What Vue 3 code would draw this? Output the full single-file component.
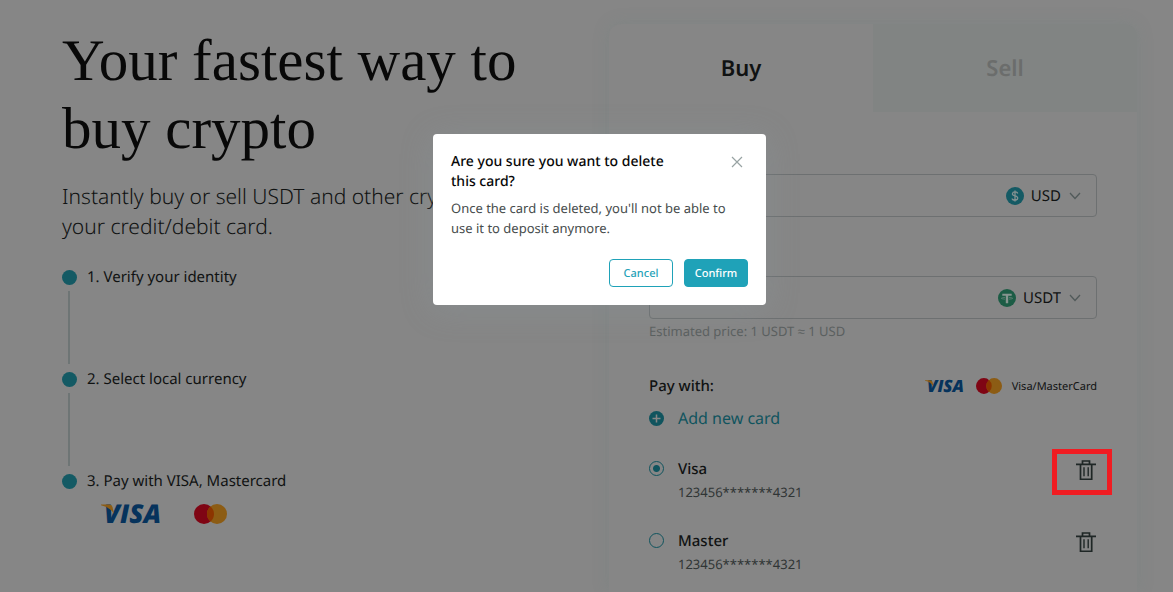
<script setup>
import { ref } from 'vue'

const steps = ['1. Verify your identity', '2. Select local currency', '3. Pay with VISA, Mastercard']
const cards = [
  { id: 'visa', name: 'Visa', number: '123456*******4321' },
  { id: 'master', name: 'Master', number: '123456*******4321' }
]
const fields = [
  { code: 'USD', label: 'Amount to pay' },
  { code: 'USDT', label: 'Amount to receive' }
]
const selected = ref('visa')
const deleting = ref('visa')
</script>

<template>
  <div class="page">
    <section class="intro">
      <h1>Your fastest way to<br />buy crypto</h1>
      <p class="lead">Instantly buy or sell USDT and other crypto<br />your credit/debit card.</p>
      <ol class="steps">
        <li v-for="s in steps" :key="s"><span class="dot"></span>{{ s }}</li>
      </ol>
      <div class="brands">
        <svg class="visa" viewBox="0 0 60 20" aria-label="Visa">
          <text x="3" y="19" class="wordmark">VISA</text>
          <path class="gold" d="M0 .500h8.500q2.500 0 3 2.500l1.500 7Q9 3 0 1.200z" />
        </svg>
        <svg class="mc" viewBox="0 0 33 20" aria-label="Mastercard">
          <circle cx="10" cy="10" r="10" fill="#7f0514" />
          <circle cx="23" cy="10" r="10" fill="#8c5c14" />
          <path d="M16.500 2.400a10 10 0 0 1 0 15.200a10 10 0 0 1 0-15.200z" fill="#8c3500" />
        </svg>
      </div>
    </section>

    <section class="panel">
      <div class="tabs">
        <button type="button" class="tab active">Buy</button>
        <button type="button" class="tab">Sell</button>
      </div>
      <div class="body">
        <div v-for="f in fields" :key="f.code" class="field">
          <input class="amount" type="text" :aria-label="f.label" />
          <svg v-if="f.code === 'USD'" class="coin" viewBox="0 0 18 18">
            <circle cx="9" cy="9" r="9" fill="#145a64" />
            <path d="M11.700 6.500Q11.300 4.900 9 4.900T6.400 6.800Q6.400 8.400 9 8.900T11.800 11.100Q11.800 13.100 9 13.100T6.200 11.400M9 3.400v11.200" fill="none" stroke="#869292" stroke-width="1.300" />
          </svg>
          <svg v-else class="coin" viewBox="0 0 18 18">
            <circle cx="9" cy="9" r="9" fill="#1c5c45" />
            <path d="M4.300 4.800h9.400v2h-3.500v7.400H7.800V6.800H4.300z" fill="#86948f" />
            <path d="M7 8.400Q3.300 8.700 3.300 9.300T7 10.200M11 8.400Q14.700 8.700 14.700 9.300T11 10.200" fill="none" stroke="#86948f" stroke-width=".500" />
          </svg>
          <select class="currency" :aria-label="f.code + ' currency'"><option>{{ f.code }}</option></select>
          <svg class="chev" viewBox="0 0 12 8"><path d="M1 1l5 5.500L11 1" /></svg>
        </div>
        <p class="price">Estimated price: 1 USDT ≈ 1 USD</p>

        <div class="paywith">
          <span class="title">Pay with:</span>
          <svg class="visa small" viewBox="0 0 60 20" aria-label="Visa">
            <text x="3" y="19" class="wordmark">VISA</text>
            <path class="gold" d="M0 .500h8.500q2.500 0 3 2.500l1.500 7Q9 3 0 1.200z" />
          </svg>
          <svg class="mc small" viewBox="0 0 33 20" aria-label="Mastercard">
            <circle cx="10" cy="10" r="10" fill="#7f0514" />
            <circle cx="23" cy="10" r="10" fill="#8c5c14" />
            <path d="M16.500 2.400a10 10 0 0 1 0 15.200a10 10 0 0 1 0-15.200z" fill="#8c3500" />
          </svg>
          <span class="methods">Visa/MasterCard</span>
        </div>

        <button type="button" class="add">
          <svg viewBox="0 0 15 15"><circle cx="7.500" cy="7.500" r="7.500" fill="#10545e" /><path d="M7.500 3.500v8M3.500 7.500h8" stroke="#868686" stroke-width="1.500" /></svg>
          Add new card
        </button>

        <div v-for="c in cards" :key="c.id" class="card">
          <input :id="c.id" v-model="selected" type="radio" name="card" :value="c.id" />
          <label :for="c.id"><strong>{{ c.name }}</strong><span>{{ c.number }}</span></label>
          <button type="button" class="trash" :class="{ marked: deleting === c.id }" :aria-label="'Delete ' + c.name">
            <svg viewBox="0 0 20 20"><path d="M0 4.300h20M6.500 4V1h7v3M4.500 4.500v14.800h11.200V4.500" stroke-width="1.700" /><path d="M8 7.300v9M12.200 7.300v9" stroke-width="1.400" /></svg>
          </button>
        </div>
      </div>
    </section>

    <div class="backdrop">
      <div class="modal" role="dialog" aria-labelledby="dialog-title">
        <header>
          <h2 id="dialog-title">Are you sure you want to delete this card?</h2>
          <button type="button" class="close" aria-label="Close"><svg viewBox="0 0 10 10"><path d="M0 0l10 10M10 0L0 10" /></svg></button>
        </header>
        <p>Once the card is deleted, you'll not be able to use it to deposit anymore.</p>
        <footer>
          <button type="button" class="btn">Cancel</button>
          <button type="button" class="btn primary">Confirm</button>
        </footer>
      </div>
    </div>
  </div>
</template>

<style>
body { background: #868686; overflow: hidden; text-rendering: geometricPrecision; }
</style>

<style scoped>
.page { position: relative; display: grid; grid-template-columns: minmax(0, 1fr) minmax(0, 528px); padding: 24px 36px 0 62px; min-height: 100vh; font-family: "Noto Sans", sans-serif; color: #101212; }
*, *::before, *::after { box-sizing: border-box; }
h1, h2, p, ol { margin: 0; padding: 0; }
button, select, input { font-family: inherit; background: none; border: 0; padding: 0; margin: 0; color: inherit; text-rendering: inherit; }
h1 { font: 400 59px/68px "Liberation Serif", serif; color: #080808; padding-top: 2px; }
.lead { margin-top: 20px; font-size: 21px; font-weight: 300; line-height: 30px; white-space: nowrap; }
.steps { list-style: none; margin-top: 24px; }
.steps li { position: relative; display: flex; align-items: center; gap: 10px; height: 22px; margin-bottom: 80px; font-size: 15px; }
.steps li:last-child { margin-bottom: 0; }
.steps li:not(:last-child)::after { content: ""; position: absolute; left: 6px; top: 25px; width: 2px; height: 73px; background: #6e7575; }
.dot { width: 15px; height: 15px; border-radius: 50%; background: #145a64; }
.brands { display: flex; align-items: center; gap: 33px; padding: 12px 0 0 39px; }
.visa { width: 60px; height: 20px; overflow: visible; }
.visa.small { width: 39px; height: 13px; }
.wordmark { font: italic 800 26px "Open Sans", sans-serif; fill: #06335c; }
.gold { fill: #8c5c14; }
.mc { width: 33px; height: 20px; }
.mc.small { width: 26px; height: 16px; margin: 0 10px 0 12px; }

.panel { min-height: 568px; border-radius: 12px 12px 0 0; box-shadow: 0 0 16px rgba(110, 130, 125, .3); }
.tabs { display: flex; height: 88px; }
.tab { flex: 1; font-size: 22px; font-weight: 600; color: #6b6d6c; }
.tab:last-child { background: #818483; border-radius: 0 12px 0 0; }
.tab.active { color: #101212; }
.body { padding: 62px 40px 0; }
.field { display: flex; align-items: center; height: 43px; margin-bottom: 59px; padding: 0 15px; border: 1px solid #6d7071; border-radius: 4px; }
.field:nth-child(2) { margin-bottom: 0; }
.amount { flex: 1; min-width: 0; outline: 0; }
.coin { width: 18px; height: 18px; margin-right: 7px; }
.currency { appearance: none; field-sizing: content; font-size: 15px; }
.chev { width: 12px; height: 8px; margin-left: 8px; fill: none; stroke: #515a5a; stroke-width: 1.3; }
.price { margin-top: 3px; font-size: 13px; line-height: 18px; color: #5b6060; }
.paywith { display: flex; align-items: center; height: 22px; margin-top: 35px; }
.title { flex: 1; font-size: 15px; font-weight: 500; }
.methods { font-size: 11px; }
.add { display: flex; align-items: center; gap: 14px; height: 24px; margin-top: 9px; font-size: 16px; color: #10545e; }
.add svg { width: 15px; height: 15px; }
.card { display: flex; gap: 14px; height: 50px; margin-top: 22px; }
.add + .card { margin-top: 28px; }
.card input { appearance: none; width: 15px; height: 15px; margin-top: 3px; border: 1px solid #10545e; border-radius: 50%; }
.card input:checked { background: radial-gradient(circle, #10545e 3px, transparent 4px); }
.card label { flex: 1; }
.card strong, .card span { display: block; line-height: 23px; }
.card strong { font-size: 15px; font-weight: 500; }
.card span { font-size: 13px; color: #303535; }
.trash { position: relative; width: 20px; height: 20px; margin: 2px 1px 0 0; }
.trash svg { display: block; width: 20px; height: 20px; fill: none; stroke: #1f2726; }
.trash.marked::after { content: ""; position: absolute; left: -24px; top: -11px; width: 60px; height: 46px; border: 5px solid #f01c22; }

.backdrop { position: absolute; inset: 0; display: flex; justify-content: center; align-items: flex-start; padding: 134px 0 0 26px; pointer-events: none; }
.modal { width: 333px; padding: 18px; border-radius: 4px; background: #fff; box-shadow: 0 4px 32px rgba(140, 156, 162, .3); pointer-events: auto; }
header { display: flex; justify-content: space-between; }
h2 { width: 240px; font-size: 14px; font-weight: 500; line-height: 20px; color: #080808; }
.close { width: 22px; height: 20px; }
.close svg { width: 10px; height: 10px; overflow: visible; stroke: #98a3a3; stroke-width: 1.2; }
.modal p { width: 280px; margin-top: 6px; font-size: 13px; line-height: 20px; color: #464c4c; }
footer { display: flex; justify-content: flex-end; gap: 11px; margin-top: 21px; }
.btn { width: 64px; height: 28px; border: 1px solid #1fa2b8; border-radius: 4px; font-size: 11px; font-weight: 500; color: #1fa2b8; }
.primary { background: #1fa2b8; color: #fff; }
</style>
